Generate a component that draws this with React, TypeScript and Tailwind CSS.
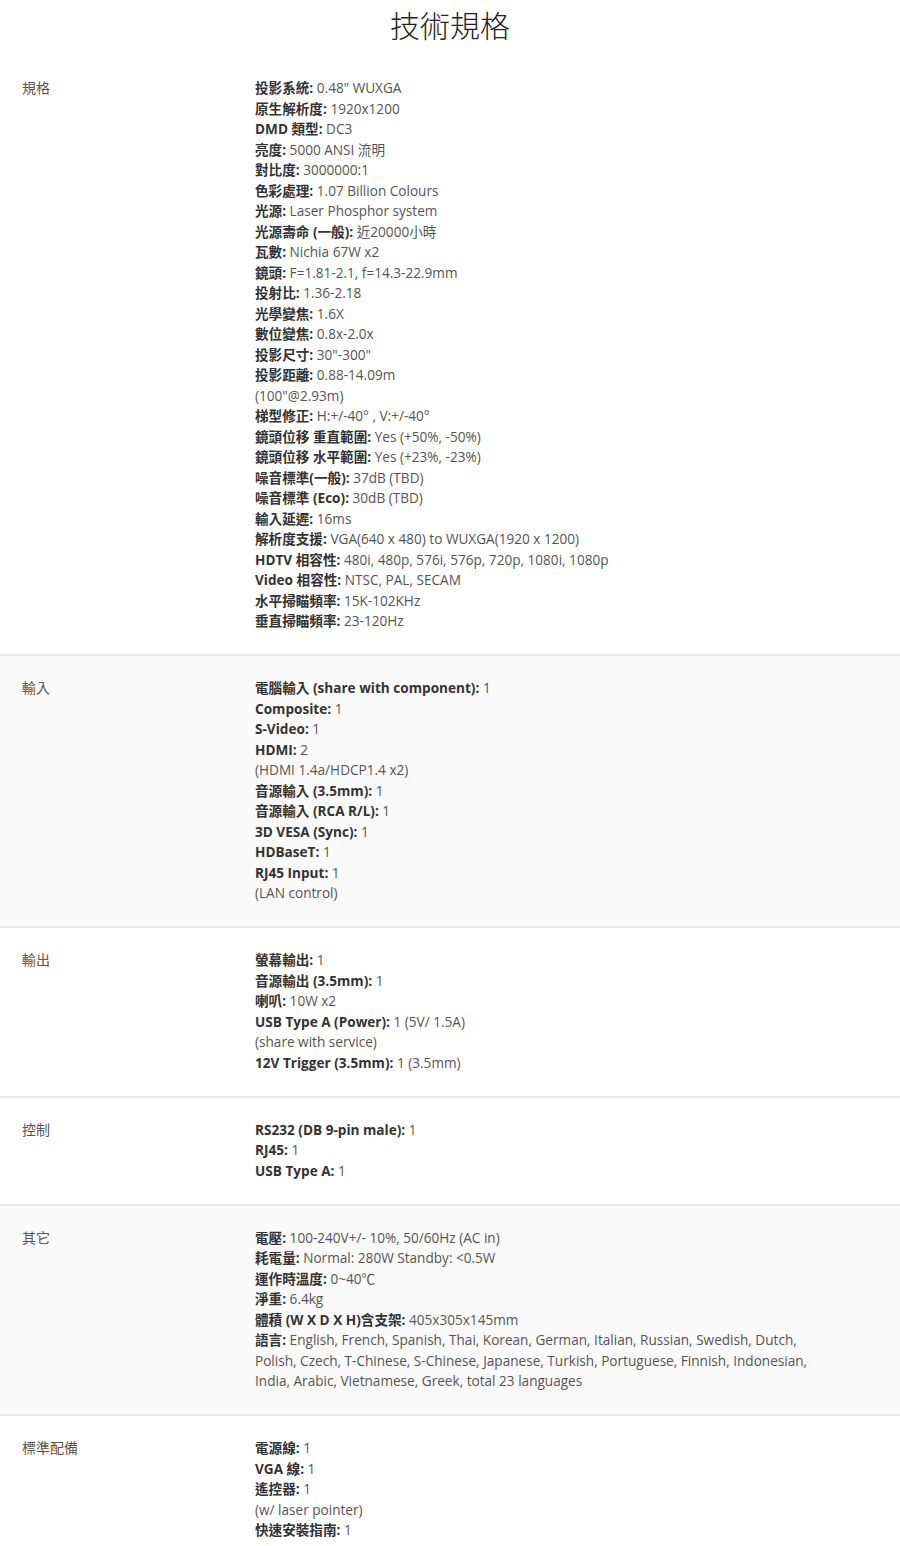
import React from 'react';

// Types
type Line = { k?: string; v?: string };

interface Section {
  title: string;
  gray?: boolean;
  lines: Line[];
}

const sections: Section[] = [
  {
    title: '規格',
    lines: [
      { k: '投影系統:', v: ' 0.48" WUXGA' },
      { k: '原生解析度:', v: ' 1920x1200' },
      { k: 'DMD 類型:', v: ' DC3' },
      { k: '亮度:', v: ' 5000 ANSI 流明' },
      { k: '對比度:', v: ' 3000000:1' },
      { k: '色彩處理:', v: ' 1.07 Billion Colours' },
      { k: '光源:', v: ' Laser Phosphor system' },
      { k: '光源壽命 (一般):', v: ' 近20000小時' },
      { k: '瓦數:', v: ' Nichia 67W x2' },
      { k: '鏡頭:', v: ' F=1.81-2.1, f=14.3-22.9mm' },
      { k: '投射比:', v: ' 1.36-2.18' },
      { k: '光學變焦:', v: ' 1.6X' },
      { k: '數位變焦:', v: ' 0.8x-2.0x' },
      { k: '投影尺寸:', v: ' 30"-300"' },
      { k: '投影距離:', v: ' 0.88-14.09m' },
      { v: '(100"@2.93m)' },
      { k: '梯型修正:', v: ' H:+/-40° , V:+/-40°' },
      { k: '鏡頭位移 重直範圍:', v: ' Yes (+50%, -50%)' },
      { k: '鏡頭位移 水平範圍:', v: ' Yes (+23%, -23%)' },
      { k: '噪音標準(一般):', v: ' 37dB (TBD)' },
      { k: '噪音標準 (Eco):', v: ' 30dB (TBD)' },
      { k: '輸入延遲:', v: ' 16ms' },
      { k: '解析度支援:', v: ' VGA(640 x 480) to WUXGA(1920 x 1200)' },
      { k: 'HDTV 相容性:', v: ' 480i, 480p, 576i, 576p, 720p, 1080i, 1080p' },
      { k: 'Video 相容性:', v: ' NTSC, PAL, SECAM' },
      { k: '水平掃瞄頻率:', v: ' 15K-102KHz' },
      { k: '垂直掃瞄頻率:', v: ' 23-120Hz' },
    ],
  },
  {
    title: '輸入',
    gray: true,
    lines: [
      { k: '電腦輸入 (share with component):', v: ' 1' },
      { k: 'Composite:', v: ' 1' },
      { k: 'S-Video:', v: ' 1' },
      { k: 'HDMI:', v: ' 2' },
      { v: '(HDMI 1.4a/HDCP1.4 x2)' },
      { k: '音源輸入 (3.5mm):', v: ' 1' },
      { k: '音源輸入 (RCA R/L):', v: ' 1' },
      { k: '3D VESA (Sync):', v: ' 1' },
      { k: 'HDBaseT:', v: ' 1' },
      { k: 'RJ45 Input:', v: ' 1' },
      { v: '(LAN control)' },
    ],
  },
  {
    title: '輸出',
    lines: [
      { k: '螢幕輸出:', v: ' 1' },
      { k: '音源輸出 (3.5mm):', v: ' 1' },
      { k: '喇叭:', v: ' 10W x2' },
      { k: 'USB Type A (Power):', v: ' 1 (5V/ 1.5A)' },
      { v: '(share with service)' },
      { k: '12V Trigger (3.5mm):', v: ' 1 (3.5mm)' },
    ],
  },
  {
    title: '控制',
    lines: [
      { k: 'RS232 (DB 9-pin male):', v: ' 1' },
      { k: 'RJ45:', v: ' 1' },
      { k: 'USB Type A:', v: ' 1' },
    ],
  },
  {
    title: '其它',
    gray: true,
    lines: [
      { k: '電壓:', v: ' 100-240V+/- 10%, 50/60Hz (AC in)' },
      { k: '耗電量:', v: ' Normal: 280W Standby: <0.5W' },
      { k: '運作時溫度:', v: ' 0~40℃' },
      { k: '淨重:', v: ' 6.4kg' },
      { k: '體積 (W X D X H)含支架:', v: ' 405x305x145mm' },
      {
        k: '語言:',
        v: ' English, French, Spanish, Thai, Korean, German, Italian, Russian, Swedish, Dutch, Polish, Czech, T-Chinese, S-Chinese, Japanese, Turkish, Portuguese, Finnish, Indonesian, India, Arabic, Vietnamese, Greek, total 23 languages',
      },
    ],
  },
  {
    title: '標準配備',
    lines: [
      { k: '電源線:', v: ' 1' },
      { k: 'VGA 線:', v: ' 1' },
      { k: '遙控器:', v: ' 1' },
      { v: '(w/ laser pointer)' },
      { k: '快速安裝指南:', v: ' 1' },
    ],
  },
];

const SpecRow: React.FC<{ section: Section; first: boolean }> = ({ section, first }) => (
  <div
    className={`flex px-[22px] pb-[22.5px] ${first ? 'pt-[23px]' : 'pt-[22px] border-t-2 border-[#e8e8e8]'} ${
      section.gray ? 'bg-[#fafafa]' : 'bg-white'
    }`}
  >
    <div className="w-[233px] shrink-0 text-[14px] leading-[20.5px] text-[#555]">{section.title}</div>
    <div className="flex-1 pr-[53px] text-[13.6px] leading-[20.5px] text-[#555]">
      {section.lines.map((line, i) => (
        <p key={i}>
          {line.k && <b className="font-bold text-[#333]">{line.k}</b>}
          {line.v}
        </p>
      ))}
    </div>
  </div>
);

export default function App() {
  return (
    <div
      className="w-[900px] bg-white"
      style={{ fontFamily: '"Open Sans", "Noto Sans CJK TC", sans-serif' }}
    >
      {/* Title */}
      <h1 className="h-[55px] flex items-center justify-center text-[30px] font-light text-[#222] pb-[4px]">
        技術規格
      </h1>

      {sections.map((s, i) => (
        <SpecRow key={s.title} section={s} first={i === 0} />
      ))}
    </div>
  );
}
